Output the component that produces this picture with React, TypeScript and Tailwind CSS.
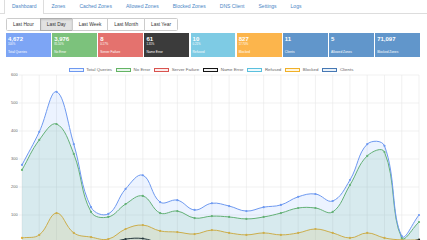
import React from "react";

const tabs = ["Dashboard", "Zones", "Cached Zones", "Allowed Zones", "Blocked Zones", "DNS Client", "Settings", "Logs"];
const ranges = ["Last Hour", "Last Day", "Last Week", "Last Month", "Last Year"];

const stats = [
  { value: "4,672", pct: "100%", label: "Total Queries", bg: "bg-[#7da5f5]" },
  { value: "3,976", pct: "85.10%", label: "No Error", bg: "bg-[#7cc27c]" },
  { value: "8", pct: "0.17%", label: "Server Failure", bg: "bg-[#e4726e]" },
  { value: "61", pct: "1.31%", label: "Name Error", bg: "bg-[#3b3b3b]" },
  { value: "10", pct: "0.21%", label: "Refused", bg: "bg-[#7ecbe4]" },
  { value: "827", pct: "17.70%", label: "Blocked", bg: "bg-[#fcb54c]" },
  { value: "11", pct: "", label: "Clients", bg: "bg-[#6196cb]" },
  { value: "5", pct: "", label: "Allowed Zones", bg: "bg-[#6196cb]" },
  { value: "71,097", pct: "", label: "Blocked Zones", bg: "bg-[#6196cb]" }
];

type Series = { label: string; line: string; fill: string; values: number[] };

const zeros = (n: number) => Array.from({ length: n }, () => 0);

const series: Series[] = [
  {
    label: "Total Queries",
    line: "rgb(110,153,240)",
    fill: "rgba(102,153,255,0.12)",
    values: [279, 397, 540, 353, 128, 104, 193, 242, 146, 153, 118, 142, 132, 114, 128, 136, 165, 175, 150, 225, 353, 347, 25, 100]
  },
  {
    label: "No Error",
    line: "rgb(100,180,100)",
    fill: "rgba(92,184,120,0.14)",
    values: [261, 368, 425, 318, 111, 93, 139, 168, 107, 114, 89, 96, 93, 86, 93, 107, 125, 125, 111, 207, 311, 325, 18, 75]
  },
  {
    label: "Server Failure",
    line: "rgb(217,83,79)",
    fill: "rgba(217,83,79,0.1)",
    values: [0, 0, 1, 0, 0, 0, 2, 1, 0, 0, 0, 1, 0, 0, 0, 1, 0, 1, 0, 0, 1, 0, 0, 0]
  },
  {
    label: "Name Error",
    line: "rgb(20,20,20)",
    fill: "rgba(0,0,0,0.05)",
    values: [1, 2, 3, 1, 1, 0, 14, 16, 1, 2, 1, 1, 0, 1, 1, 0, 1, 2, 1, 0, 1, 0, 0, 12]
  },
  {
    label: "Refused",
    line: "rgb(91,192,222)",
    fill: "rgba(91,192,222,0.1)",
    values: zeros(24)
  },
  {
    label: "Blocked",
    line: "rgb(240,176,40)",
    fill: "rgba(255,190,40,0.15)",
    values: [18, 29, 107, 36, 21, 14, 50, 64, 43, 39, 32, 46, 36, 29, 36, 29, 36, 50, 36, 18, 36, 18, 11, 11]
  },
  {
    label: "Clients",
    line: "rgb(70,120,180)",
    fill: "rgba(51,122,183,0.1)",
    values: [4, 5, 6, 5, 3, 3, 4, 5, 4, 4, 3, 4, 4, 3, 4, 4, 5, 5, 4, 5, 6, 6, 2, 3]
  }
];

const TOP = 72;
const X = (i: number) => 22 + i * (397 / 23);
const Y = (v: number) => 243 - v * 0.28 - TOP;

function buildPath(values: number[]) {
  const pts = values.map((v, i) => ({ x: X(i), y: Y(v) }));
  const minY = Y(600);
  const maxY = Y(0);
  const clamp = (y: number) => Math.min(maxY, Math.max(minY, y));
  const cps = pts.map((p, i) => {
    const prev = pts[i - 1] || p;
    const next = pts[i + 1] || p;
    const d01 = Math.hypot(p.x - prev.x, p.y - prev.y);
    const d12 = Math.hypot(next.x - p.x, next.y - p.y);
    const sum = d01 + d12 || 1;
    const fa = (0.4 * d01) / sum;
    const fb = (0.4 * d12) / sum;
    return {
      prev: { x: p.x - fa * (next.x - prev.x), y: clamp(p.y - fa * (next.y - prev.y)) },
      next: { x: p.x + fb * (next.x - prev.x), y: clamp(p.y + fb * (next.y - prev.y)) }
    };
  });
  let d = `M${pts[0].x},${pts[0].y}`;
  for (let i = 1; i < pts.length; i++) {
    d += ` C${cps[i - 1].next.x},${cps[i - 1].next.y} ${cps[i].prev.x},${cps[i].prev.y} ${pts[i].x},${pts[i].y}`;
  }
  return { d, pts };
}

function Chart() {
  const ticks = [600, 500, 400, 300, 200, 100];
  return (
    <svg width={427} height={168} className="block">
      {Array.from({ length: 24 }, (_, i) => (
        <line key={`v${i}`} x1={X(i)} x2={X(i)} y1={Y(600)} y2={Y(0) + 3} stroke="#e8e8e8" strokeWidth={0.6} />
      ))}
      {ticks.map((t) => (
        <g key={t}>
          <line x1={19} x2={419} y1={Y(t)} y2={Y(t)} stroke="#e8e8e8" strokeWidth={0.6} />
          <text
            x={17.8}
            y={Y(t)}
            textAnchor="end"
            dominantBaseline="middle"
            fontSize={4}
            fill="#666"
            fontFamily="'Liberation Sans', Arial, sans-serif"
          >
            {t}
          </text>
        </g>
      ))}
      {[...series].reverse().map((s) => {
        const { d, pts } = buildPath(s.values);
        const area = `${d} L${pts[pts.length - 1].x},${Y(0)} L${pts[0].x},${Y(0)} Z`;
        return (
          <g key={s.label}>
            <path d={area} fill={s.fill} stroke="none" />
            <path d={d} fill="none" stroke={s.line} strokeWidth={1} />
            {pts.map((p, i) => (
              <circle key={i} cx={p.x} cy={p.y} r={1.1} fill={s.line} />
            ))}
          </g>
        );
      })}
    </svg>
  );
}

export default function App() {
  return (
    <div className="h-[240px] w-[427px] overflow-hidden bg-white font-['Liberation_Sans',Arial,sans-serif]">
      <nav className="flex h-[14px] border-b border-[#dddddd] pl-[4px]">
        {tabs.map((tab, i) => (
          <div
            key={tab}
            className={
              i === 0
                ? "-mb-px flex items-center border-x border-[#dddddd] bg-white px-[7px] text-[5px] text-[#4a86c5]"
                : "flex items-center px-[7px] text-[5px] text-[#4a86c5]"
            }
          >
            {tab}
          </div>
        ))}
      </nav>

      <div className="ml-[6px] mt-[4px] flex h-[13px]">
        {ranges.map((r, i) => (
          <div
            key={r}
            className={
              "-ml-px flex items-center border px-[6px] text-[4.8px] text-[#333333] first:ml-0 first:rounded-l-[1.5px] last:rounded-r-[1.5px] " +
              (i === 1 ? "border-[#adadad] bg-[#e2e2e2] shadow-[inset_0_1px_2px_rgba(0,0,0,0.12)]" : "border-[#cccccc] bg-white")
            }
          >
            {r}
          </div>
        ))}
      </div>

      <div className="ml-[6px] mt-[2px] grid h-[24px] w-[414px] grid-cols-9 gap-[1.3px]">
        {stats.map((s) => (
          <div key={s.label} className={`flex flex-col px-[2px] pt-[3px] text-white ${s.bg}`}>
            <span className="text-[6px] font-bold leading-[7px]">{s.value}</span>
            <span className="h-[3.5px] text-[2.8px] leading-[3.5px]">{s.pct}</span>
            <span className="mt-[3px] text-[3.2px] leading-[4px]">{s.label}</span>
          </div>
        ))}
      </div>

      <div className="mt-[11px] flex h-[4px] items-center justify-center gap-[4px] pr-[5px]">
        {series.map((s) => (
          <div key={s.label} className="flex items-center gap-[2.5px]">
            <span className="h-[4px] w-[15px] border-[0.8px]" style={{ borderColor: s.line, backgroundColor: s.fill }} />
            <span className="text-[4.4px] leading-[4px] text-[#666666]">{s.label}</span>
          </div>
        ))}
      </div>

      <Chart />
    </div>
  );
}
